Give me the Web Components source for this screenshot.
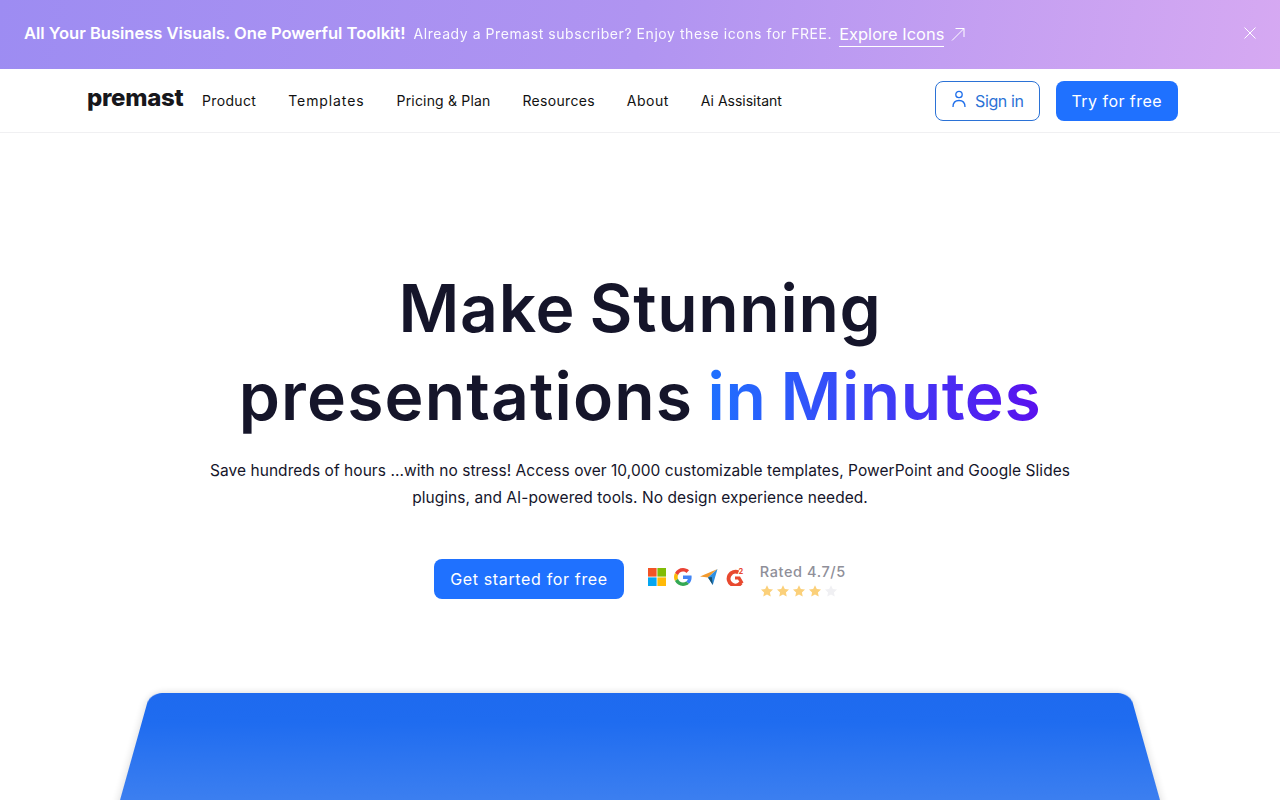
<!DOCTYPE html>
<html lang="en">
<head>
<meta charset="utf-8">
<title>Premast</title>
<style>
    html, body { margin: 0; height: 800px; overflow: hidden; background: #fff; }
    body { font-family: Inter, "Noto Sans", sans-serif; }
    app-page { height: 800px; overflow: hidden; }
</style>
</head>
<body>
<app-page>
    <promo-banner></promo-banner>
    <site-nav></site-nav>
    <hero-section></hero-section>
    <preview-panel></preview-panel>
</app-page>

<template id="promo-banner">
    <style>
        :host {
            display: flex;
            align-items: center;
            height: 69px;
            padding: 0 23px 3px 24px;
            box-sizing: border-box;
            color: #fff;
            background: linear-gradient(100deg, #9d8cf2 0%, #b094f1 50%, #d6a9f2 100%);
        }
        b { font-size: 16.6px; font-weight: 600; letter-spacing: -.03px; }
        span { font-size: 14px; margin-left: 8px; letter-spacing: .56px; opacity: .95; }
        a { font-size: 16.4px; margin-left: 7px; padding-bottom: 2px; border-bottom: 1px solid #fff; position: relative; top: 2px; letter-spacing: .05px; }
        svg { display: block; }
        .arrow { margin-left: 7px; position: relative; top: 1px; }
        .close { margin-left: auto; }
    </style>
    <b>All Your Business Visuals. One Powerful Toolkit!</b>
    <span>Already a Premast subscriber? Enjoy these icons for FREE.</span>
    <a>Explore Icons</a>
    <svg class="arrow" width="14" height="14" viewBox="0 0 14 14" fill="none" stroke="#fff" stroke-width="1"><path d="M1 13.5 13 1.5M4.5 1.5H13V10"/></svg>
    <svg class="close" width="14" height="14" viewBox="0 0 14 14" fill="none" stroke="#fff" stroke-width="1"><path d="M1.5 1.5 12.500 12.500M12.500 1.5 1.5 12.500"/></svg>
</template>

<template id="site-nav">
    <style>
        :host {
            display: flex;
            align-items: center;
            height: 64px;
            padding: 0 102px 0 87px;
            box-sizing: border-box;
            border-bottom: 1px solid #f0f0f2;
        }
        .logo { font-size: 24px; font-weight: 800; letter-spacing: -.3px; color: #17171c; width: 115px; position: relative; top: -3px; line-height: 1; }
        nav { display: flex; gap: 32px; font-size: 14px; color: #111; }
        .right { margin-left: auto; display: flex; gap: 16px; }
        .sign { letter-spacing: -.4px; }
    </style>
    <div class="logo">premast</div>
    <nav>
        <span style="letter-spacing:.35px">Product</span>
        <span style="letter-spacing:.9px">Templates</span>
        <span style="letter-spacing:.18px">Pricing &amp; Plan</span>
        <span style="letter-spacing:.3px">Resources</span>
        <span style="letter-spacing:.5px">About</span>
        <span style="letter-spacing:0">Ai Assisitant</span>
    </nav>
    <div class="right">
        <action-button variant="outline" class="sign">
            <svg slot="icon" width="16" height="18" viewBox="0 0 16 18" fill="none" stroke="#1f6feb" stroke-width="1.3"><circle cx="8" cy="4.5" r="3.2"/><path d="M2 17c0-4 2.400-6.500 6-6.500s6 2.500 6 6.500"/></svg>
            Sign in
        </action-button>
        <action-button>Try for free</action-button>
    </div>
</template>

<template id="action-button">
    <style>
        :host {
            display: inline-flex;
            align-items: center;
            gap: 8px;
            height: 40px;
            padding: 0 16px;
            box-sizing: border-box;
            border-radius: 8px;
            font-size: 16px;
            letter-spacing: .45px;
            color: #fff;
            background: #1f71ff;
        }
        :host([variant="outline"]) {
            color: #2b72d6;
            background: #fff;
            border: 1px solid #2b72d6;
            padding: 0 15px;
        }
        ::slotted(svg) { display: block; margin-top: -4px; }
    </style>
    <slot name="icon"></slot>
    <slot></slot>
</template>

<template id="hero-section">
    <style>
        :host {
            display: flex;
            flex-direction: column;
            align-items: center;
            padding-top: 131px;
            text-align: center;
        }
        h1 {
            margin: 0;
            font-size: 66px;
            line-height: 88px;
            font-weight: 600;
            letter-spacing: .7px;
            word-spacing: -3px;
            color: #15152a;
        }
        h1 span { letter-spacing: 1.15px; }
        em {
            font-style: normal;
            letter-spacing: .55px;
            background: linear-gradient(90deg, #1f71ff 0%, #5a10ee 100%);
            -webkit-background-clip: text;
            background-clip: text;
            color: transparent;
        }
        p {
            margin: 17px 0 0;
            width: 880px;
            font-size: 15.5px;
            line-height: 27px;
            letter-spacing: .05px;
            color: #15152a;
        }
        .cta { display: flex; align-items: center; margin-top: 48px; gap: 24px; }
        .cta action-button { letter-spacing: .65px; }
    </style>
    <h1>Make Stunning<br><span>presentations</span> <em>in Minutes</em></h1>
    <p>Save hundreds of hours ...with no stress! Access over 10,000 customizable templates, PowerPoint and Google Slides plugins, and AI-powered tools. No design experience needed.</p>
    <div class="cta">
        <action-button>Get started for free</action-button>
        <rating-badge></rating-badge>
    </div>
</template>

<template id="rating-badge">
    <style>
        :host { display: flex; align-items: center; gap: 16px; }
        .logos { display: flex; gap: 8px; margin-bottom: 4px; }
        svg { display: block; }
        .score { padding-top: 2px; }
        .label { font-size: 14.5px; font-weight: 500; color: #8f8f99; letter-spacing: .6px; line-height: 18px; }
        .stars { display: flex; gap: 2px; margin-top: 3px; }
    </style>
    <div class="logos">
        <svg width="18" height="18" viewBox="0 0 18 18"><rect width="8.600" height="8.600" fill="#f35325"/><rect x="9.400" width="8.600" height="8.600" fill="#81bc06"/><rect y="9.400" width="8.600" height="8.600" fill="#05a6f0"/><rect x="9.400" y="9.400" width="8.600" height="8.600" fill="#ffba08"/></svg>
        <svg width="18" height="18" viewBox="0 0 48 48"><path fill="#ea4335" d="M24 9.500c3.500 0 6.700 1.200 9.200 3.600l6.900-6.900C35.900 2.400 30.500 0 24 0 14.600 0 6.500 5.400 2.600 13.200l8 6.200C12.500 13.600 17.800 9.500 24 9.500z"/><path fill="#4285f4" d="M47 24.500c0-1.600-.1-3.100-.4-4.500H24v9h12.900c-.6 3-2.200 5.500-4.700 7.200l7.700 6C44.400 38 47 31.800 47 24.500z"/><path fill="#fbbc05" d="M10.600 28.600c-.5-1.400-.8-3-.8-4.600s.3-3.200.8-4.600l-8-6.200C.9 16.400 0 20.100 0 24s.9 7.600 2.600 10.800l8-6.200z"/><path fill="#34a853" d="M24 48c6.500 0 11.900-2.100 15.900-5.800l-7.700-6c-2.200 1.500-4.900 2.300-8.200 2.300-6.200 0-11.500-4.100-13.400-9.900l-8 6.200C6.500 42.600 14.600 48 24 48z"/></svg>
        <svg width="18" height="18" viewBox="0 0 18 18"><path fill="#f29a2e" d="M0 8.500 17.500 1 8 9.500z"/><path fill="#2f8fe0" d="M17.500 1 8 9.500 12.800 17z"/><path fill="#17506e" d="M8 9.500l4.800 7.500-1-8z"/></svg>
        <svg width="18" height="18" viewBox="0 0 18 18"><path fill="none" stroke="#e8492f" stroke-width="4" d="M12.400 4.300A6.900 6.900 0 1 0 15 14.800"/><path fill="#e8492f" d="M9 8.500h5l3.500 6-2.800 1.600-2.700-4.600h-3z"/><text x="12.600" y="6.200" font-size="7.500" font-weight="700" fill="#e8492f" font-family="Inter, sans-serif">2</text></svg>
    </div>
    <div class="score">
        <div class="label">Rated 4.7/5</div>
        <div class="stars">
            <star-icon></star-icon><star-icon></star-icon><star-icon></star-icon><star-icon></star-icon><star-icon off></star-icon>
        </div>
    </div>
</template>

<template id="star-icon">
    <style>
        :host { display: block; width: 14px; height: 14px; color: #fbd07a; }
        :host([off]) { color: #f0f0f3; }
        svg { display: block; }
    </style>
    <svg width="14" height="14" viewBox="0 0 24 24" fill="currentColor"><path d="M12 2l3.100 6.600 7.200.9-5.300 5 1.400 7.100L12 18.100l-6.400 3.500L7 14.500l-5.300-5 7.200-.9z"/></svg>
</template>

<template id="preview-panel">
    <style>
        :host {
            display: block;
            width: 980px;
            height: 420px;
            margin: 94px auto 0;
            border-radius: 12px 12px 0 0;
            background: linear-gradient(180deg, #1e6aef 0%, #1f6cf0 8%, #3c7ff0 28%, #5a93f2 60%);
            box-shadow: 0 0 8px rgba(0,0,0,.16);
            transform-origin: 50% 0;
            transform: perspective(1010px) rotateX(30deg);
        }
    </style>
</template>

<script>
    // every element just clones its template of the same name
    class TemplateElement extends HTMLElement {
        constructor() {
            super();
            this.attachShadow({mode: 'open'});
            const template = document.getElementById(this.localName);
            if (template) this.shadowRoot.appendChild(template.content.cloneNode(true));
        }
    }

    class AppPage extends HTMLElement {
        constructor() {
            super();
            this.attachShadow({mode: 'open'});
            this.shadowRoot.innerHTML = `<style>:host{display:block}</style><slot></slot>`;
        }
    }

    customElements.define('app-page', AppPage);
    ['promo-banner', 'site-nav', 'action-button', 'hero-section', 'rating-badge', 'star-icon', 'preview-panel'].forEach(name => {
        customElements.define(name, class extends TemplateElement {});
    });
</script>
</body>
</html>
